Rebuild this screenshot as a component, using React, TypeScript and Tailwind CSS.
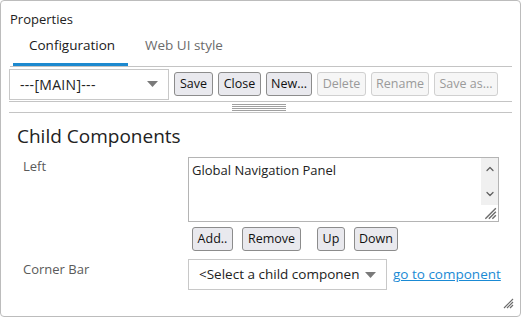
import { ChevronUp, ChevronDown } from 'lucide-react';

function Btn({ label, disabled, className = '' }: { label: string; disabled?: boolean; className?: string }) {
  return (
    <button
      className={
        disabled
          ? `h-[24px] px-0 rounded-[3px] border border-[#d0d0d0] bg-[#f6f6f6] text-[#9a9a9a] text-[12.5px] leading-[22px] ${className}`
          : `h-[24px] px-0 rounded-[3px] border border-[#8c8c8c] bg-[#e9e9ee] text-[#111] text-[12.5px] leading-[22px] ${className}`
      }
    >
      {label}
    </button>
  );
}

function Caret() {
  return (
    <svg width="11" height="6" viewBox="0 0 11 6" className="shrink-0">
      <path d="M0 0 L11 0 L5.5 6 Z" fill="#7a7a7a" />
    </svg>
  );
}

function Grip({ size = 12 }: { size?: number }) {
  return (
    <svg width={size} height={size} viewBox="0 0 12 12">
      <path d="M11 2 L2 11 M11 5 L5 11 M11 8 L8 11" stroke="#6c6c6c" strokeWidth="1.2" />
    </svg>
  );
}

export default function App() {
  return (
    <div className="w-[522px] h-[317px] bg-white text-[13px] text-[#222]" style={{ fontFamily: '"Open Sans", "Noto Sans", sans-serif' }}>
      <div className="relative w-[521px] h-[317px] border border-[#bcbcbc] rounded-[4px] overflow-hidden">
        {/* Header */}
        <div className="pl-[9px] pt-[9px] h-[27px] leading-[18px] text-[13px]">Properties</div>

        {/* Tabs */}
        <div className="ml-[9px] mr-[8px] flex border-b border-[#c4c4c4] h-[39px]">
          <div className="w-[115px] ml-[3px] pl-[16px] border-b-[3px] border-[#1d89cf] leading-[35px] text-[#1a1a1a] text-[13.5px]">
            Configuration
          </div>
          <div className="pl-[17px] leading-[35px] text-[#6b6b6b] text-[13.5px]">Web UI style</div>
        </div>

        {/* Toolbar */}
        <div className="ml-[8px] mr-[8px] flex items-center gap-[5px] h-[35px] border-b border-[#c4c4c4]">
          <div className="w-[160px] h-[31px] border border-[#c8c8c8] flex items-center pl-[10px] pr-[10px] justify-between">
            <span className="text-[14px] tracking-[0.3px]">---[MAIN]---</span>
            <Caret />
          </div>
          <Btn label="Save" className="w-[39px]" />
          <Btn label="Close" className="w-[43px]" />
          <Btn label="New..." className="w-[46px]" />
          <Btn label="Delete" disabled className="w-[49px]" />
          <Btn label="Rename" disabled className="w-[58px]" />
          <Btn label="Save as..." disabled className="w-[64px]" />
        </div>

        {/* Splitter */}
        <div className="ml-[8px] mr-[8px] h-[11px] border-b border-[#c4c4c4] flex justify-center items-center">
          <div className="w-[54px] flex flex-col gap-[1px] mr-[3px]">
            <div className="h-[1px] bg-[#a0a0a0]" />
            <div className="h-[1px] bg-[#a0a0a0]" />
            <div className="h-[1px] bg-[#a0a0a0]" />
            <div className="h-[1px] bg-[#a0a0a0]" />
          </div>
        </div>

        {/* Child components */}
        <div className="pl-[16px] pt-[10px] text-[19px] leading-[26px] text-[#222]">Child Components</div>

        <div className="flex mt-[8px]">
          <div className="w-[187px] pl-[22px] text-[#5a5a5a]">Left</div>
          <div className="flex flex-col">
            <div className="w-[311px] h-[65px] border border-[#b4b4b4] flex relative">
              <div className="flex-1 pl-[3px] pt-[3px] leading-[18px]">Global Navigation Panel</div>
              <div className="w-[17px] h-[47px] bg-[#f0f0f0] flex flex-col justify-between items-center py-[5px]">
                <ChevronUp size={12} strokeWidth={2.5} color="#606060" />
                <ChevronDown size={12} strokeWidth={2.5} color="#606060" />
              </div>
              <div className="absolute right-[1px] bottom-[1px]">
                <Grip size={14} />
              </div>
            </div>
            <div className="flex mt-[5px] ml-[4px]">
              <Btn label="Add.." className="h-[23px] w-[41px]" />
              <Btn label="Remove" className="ml-[9px] h-[23px] w-[59px]" />
              <Btn label="Up" className="ml-[16px] h-[23px] w-[28px]" />
              <Btn label="Down" className="ml-[9px] h-[23px] w-[44px]" />
            </div>
          </div>
        </div>

        <div className="flex mt-[8px] items-center">
          <div className="w-[187px] pl-[22px] pb-[9px] text-[#5a5a5a]">Corner Bar</div>
          <div className="w-[199px] h-[31px] border border-[#c8c8c8] flex items-center pl-[10px] pr-[10px] justify-between">
            <span className="text-[13.5px] whitespace-nowrap overflow-hidden">&lt;Select a child componen</span>
            <Caret />
          </div>
          <a className="ml-[6px] text-[#1a8ad4] underline text-[13.5px]">go to component</a>
        </div>

        <div className="absolute right-[6px] bottom-[7px]">
          <Grip />
        </div>
      </div>
    </div>
  );
}
